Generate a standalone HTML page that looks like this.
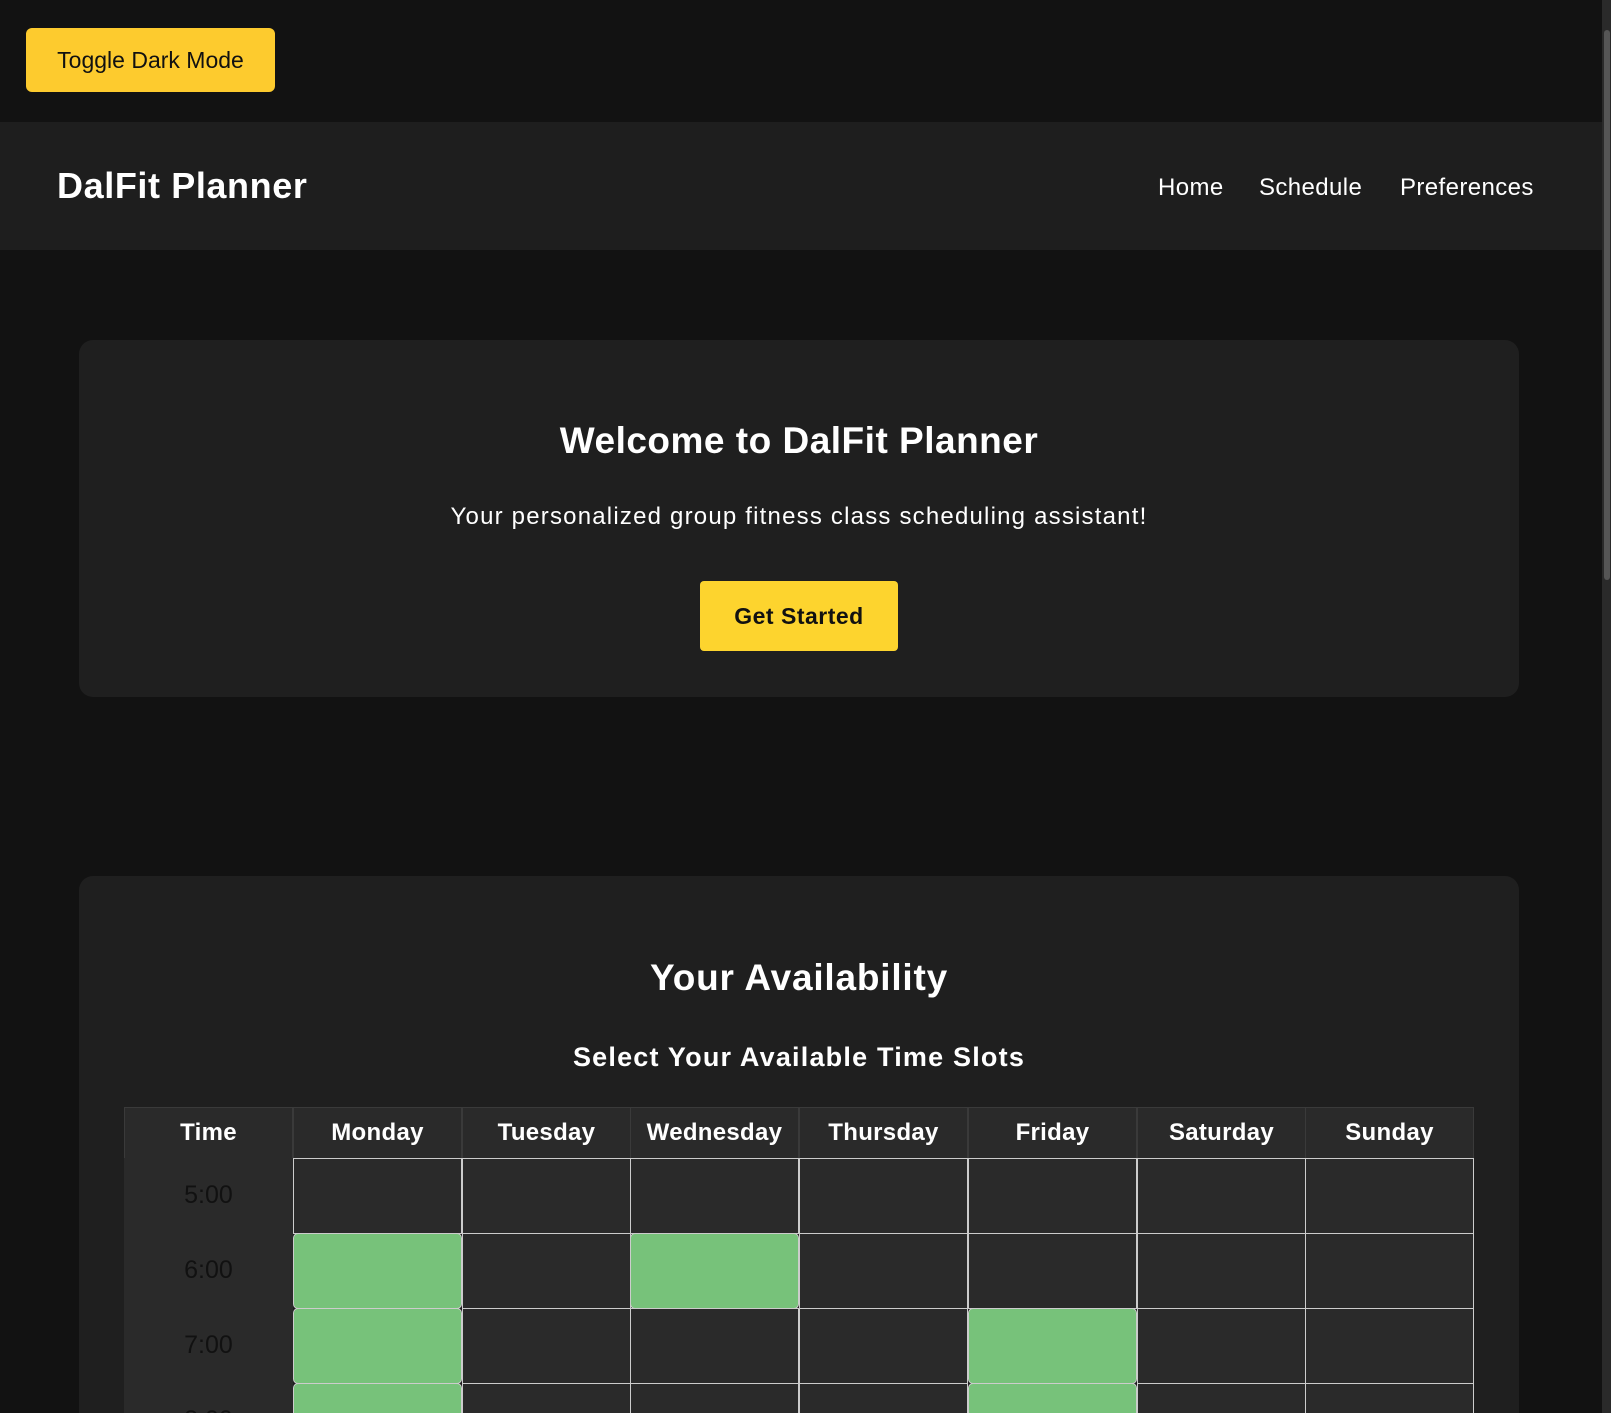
<!DOCTYPE html>
<html><head><style>
*{margin:0;padding:0;box-sizing:border-box}
html,body{width:1611px;height:1413px;overflow:hidden}
body{background:#121212;font-family:"Liberation Sans",sans-serif;color:#fff;position:relative}
.abs{position:absolute}
#tog{left:26px;top:28px;width:249px;height:64px;background:#fdcb2e;border-radius:6px;color:#111;font-size:23px;display:flex;align-items:center;justify-content:center}
#hdr{left:0;top:122px;width:1602px;height:128px;background:#1e1e1e}
#title{left:57px;top:165px;font-size:36px;font-weight:bold;letter-spacing:0.6px}
.nav{top:174px;font-size:24px;letter-spacing:0.4px}
.card{left:79px;width:1440px;background:#1f1f1f;border-radius:14px}
.c{text-align:center;width:1440px;left:79px}
#gs{left:700px;top:581px;width:198px;height:70px;background:#fdd42e;border-radius:4px;color:#111;font-weight:bold;font-size:23px;letter-spacing:0.5px;display:flex;align-items:center;justify-content:center}
.th{background:#2a2a2a;border:1px solid #3a3a3a;font-weight:bold;font-size:24px;letter-spacing:0.3px;display:flex;align-items:center;justify-content:center;height:52px;width:169px;top:1107px}
.cell{background:#2a2a2a;border:1px solid #ccc;width:169px;height:76px}
.g{background:#77c27a;border-radius:5px;border-color:#ccc}
.tm{background:#2a2a2a;width:169px;height:75px;color:#111;font-size:25px;display:flex;align-items:center;justify-content:center}
#sb{left:1602px;top:0;width:9px;height:1413px;background:#2a2a2a}
#th2{left:1604px;top:30px;width:6px;height:550px;background:#555;border-radius:3px}
</style></head><body>
<div class="abs" id="tog">Toggle Dark Mode</div>
<div class="abs" id="hdr"></div>
<div class="abs" id="title">DalFit Planner</div>
<div class="abs nav" style="left:1158px">Home</div>
<div class="abs nav" style="left:1259px">Schedule</div>
<div class="abs nav" style="left:1400px">Preferences</div>

<div class="abs card" style="top:340px;height:357px"></div>
<div class="abs c" style="top:420px;font-size:37px;font-weight:bold;letter-spacing:0.5px">Welcome to DalFit Planner</div>
<div class="abs c" style="top:503px;font-size:24px;letter-spacing:1.2px">Your personalized group fitness class scheduling assistant!</div>
<div class="abs" id="gs">Get Started</div>

<div class="abs card" style="top:876px;height:600px"></div>
<div class="abs c" style="top:957px;font-size:37px;font-weight:bold;letter-spacing:0.8px">Your Availability</div>
<div class="abs c" style="top:1042px;font-size:27px;font-weight:bold;letter-spacing:1.2px">Select Your Available Time Slots</div>

<div class="abs th" style="left:124px">Time</div>
<div class="abs th" style="left:293px">Monday</div>
<div class="abs th" style="left:462px">Tuesday</div>
<div class="abs th" style="left:630px">Wednesday</div>
<div class="abs th" style="left:799px">Thursday</div>
<div class="abs th" style="left:968px">Friday</div>
<div class="abs th" style="left:1137px">Saturday</div>
<div class="abs th" style="left:1305px">Sunday</div>

<div class="abs tm" style="left:124px;top:1158px">5:00</div>
<div class="abs tm" style="left:124px;top:1233px">6:00</div>
<div class="abs tm" style="left:124px;top:1308px">7:00</div>
<div class="abs tm" style="left:124px;top:1383px">8:00</div>

<div class="abs cell" style="left:293px;top:1158px"></div><div class="abs cell" style="left:462px;top:1158px"></div><div class="abs cell" style="left:630px;top:1158px"></div><div class="abs cell" style="left:799px;top:1158px"></div><div class="abs cell" style="left:968px;top:1158px"></div><div class="abs cell" style="left:1137px;top:1158px"></div><div class="abs cell" style="left:1305px;top:1158px"></div>

<div class="abs cell g" style="left:293px;top:1233px"></div><div class="abs cell" style="left:462px;top:1233px"></div><div class="abs cell g" style="left:630px;top:1233px"></div><div class="abs cell" style="left:799px;top:1233px"></div><div class="abs cell" style="left:968px;top:1233px"></div><div class="abs cell" style="left:1137px;top:1233px"></div><div class="abs cell" style="left:1305px;top:1233px"></div>

<div class="abs cell g" style="left:293px;top:1308px"></div><div class="abs cell" style="left:462px;top:1308px"></div><div class="abs cell" style="left:630px;top:1308px"></div><div class="abs cell" style="left:799px;top:1308px"></div><div class="abs cell g" style="left:968px;top:1308px"></div><div class="abs cell" style="left:1137px;top:1308px"></div><div class="abs cell" style="left:1305px;top:1308px"></div>

<div class="abs cell g" style="left:293px;top:1383px"></div><div class="abs cell" style="left:462px;top:1383px"></div><div class="abs cell" style="left:630px;top:1383px"></div><div class="abs cell" style="left:799px;top:1383px"></div><div class="abs cell g" style="left:968px;top:1383px"></div><div class="abs cell" style="left:1137px;top:1383px"></div><div class="abs cell" style="left:1305px;top:1383px"></div>

<div class="abs" id="sb"></div>
<div class="abs" id="th2"></div>
</body></html>
